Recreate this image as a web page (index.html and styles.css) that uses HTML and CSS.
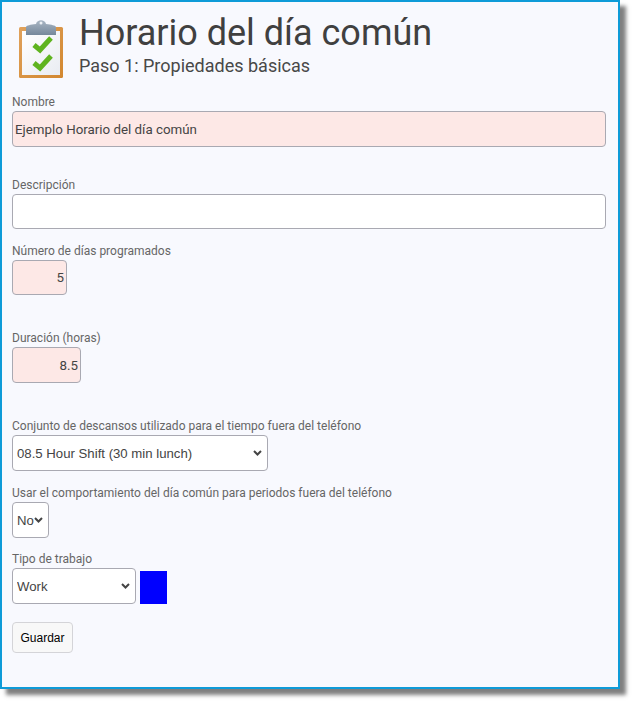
FILE: index.html
```html
<!DOCTYPE html>
<html lang="es">
<head>
    <meta charset="UTF-8">
    <meta name="viewport" content="width=device-width, initial-scale=1.0">
    <title>Horario del día común</title>
    <link rel="stylesheet" href="styles.css">
</head>
<body>
    <div class="frame">
        <div class="page-header">
            <svg class="header-icon" width="46" height="60" viewBox="0 0 46 60">
                <defs>
                    <linearGradient id="board-grad" x1="0" y1="0" x2="1" y2="1">
                        <stop offset="0" stop-color="#e0a25c"/>
                        <stop offset="1" stop-color="#d2872f"/>
                    </linearGradient>
                    <linearGradient id="clip-grad" x1="0" y1="0" x2="0" y2="1">
                        <stop offset="0" stop-color="#a9b6c4"/>
                        <stop offset="1" stop-color="#76889b"/>
                    </linearGradient>
                    <linearGradient id="paper-grad" x1="0" y1="0" x2="1" y2="1">
                        <stop offset="0" stop-color="#ffffff"/>
                        <stop offset="1" stop-color="#e9ecf2"/>
                    </linearGradient>
                </defs>
                <rect x="0" y="7" width="44" height="51" rx="1.5" fill="url(#board-grad)"/>
                <rect x="3" y="11" width="38" height="44" fill="url(#paper-grad)"/>
                <path d="M7 7 C8 5 11 5 17 4 C18 -1 26 -1 27 4 C33 5 36 5 37 7 L37 15 L7 15 Z" fill="url(#clip-grad)"/>
                <circle cx="22" cy="3" r="1.5" fill="#eef1f5"/>
                <path d="M15 25 L21 30 L32 18" fill="none" stroke="#5fb41f" stroke-width="5"/>
                <path d="M15 43 L21 48 L32 36" fill="none" stroke="#5fb41f" stroke-width="5"/>
            </svg>
            <div class="header-text">
                <h1>Horario del día común</h1>
                <h2>Paso 1: Propiedades básicas</h2>
            </div>
        </div>

        <form class="schedule-form">
            <div class="field">
                <label>Nombre</label>
                <input type="text" class="text-input required" value="Ejemplo Horario del día común">
            </div>
            <div class="field gap-large">
                <label>Descripción</label>
                <input type="text" class="text-input short-input" value="">
            </div>
            <div class="field gap-small">
                <label>Número de días programados</label>
                <input type="text" class="text-input short-input required number-input days-input" value="5">
            </div>
            <div class="field gap-wide">
                <label>Duración (horas)</label>
                <input type="text" class="text-input required number-input hours-input" value="8.5">
            </div>
            <div class="field gap-wide">
                <label>Conjunto de descansos utilizado para el tiempo fuera del teléfono</label>
                <select class="select-input break-select">
                    <option>08.5 Hour Shift (30 min lunch)</option>
                </select>
            </div>
            <div class="field gap-small">
                <label>Usar el comportamiento del día común para periodos fuera del teléfono</label>
                <select class="select-input yesno-select">
                    <option>No</option>
                </select>
            </div>
            <div class="field gap-tight">
                <label>Tipo de trabajo</label>
                <div class="work-row">
                    <select class="select-input work-select">
                        <option>Work</option>
                    </select>
                    <span class="color-swatch"></span>
                </div>
            </div>
            <button type="button" class="save-btn">Guardar</button>
        </form>
    </div>
</body>
</html>
```

FILE: styles.css
```css
html, body {
    margin: 0;
    background: #ffffff;
}
body {
    font-family: Roboto, "Liberation Sans", sans-serif;
    height: 703px;
    overflow: hidden;
}
.frame {
    box-sizing: border-box;
    width: 620px;
    height: 689px;
    padding: 0 12px 0 10px;
    background-color: #f8f9fe;
    border: 2px solid #0e9bd8;
    box-shadow: 6px 6px 4px rgba(0, 0, 0, 0.5);
    color: #444;
}
.page-header {
    display: flex;
    align-items: flex-start;
    height: 93px;
}
.header-icon {
    margin: 18px 0 0 7px;
    flex-shrink: 0;
}
.header-text {
    margin-left: 14px;
    padding-top: 10px;
}
h1 {
    margin: 0;
    font-size: 36px;
    line-height: 42px;
    font-weight: 400;
    color: #404040;
}
h2 {
    margin: 0;
    font-size: 18px;
    line-height: 24px;
    font-weight: 400;
    color: #484848;
}
.gap-large {
    margin-top: 31px;
}
.gap-wide {
    margin-top: 36px;
}
.gap-small {
    margin-top: 15px;
}
.gap-tight {
    margin-top: 14px;
}
label {
    display: block;
    font-size: 12px;
    line-height: 14px;
    padding-bottom: 2px;
    color: #666;
}
.text-input, .select-input {
    display: block;
    box-sizing: border-box;
    height: 36px;
    margin: 0;
    border: 1px solid #a9a9b2;
    border-radius: 4px;
    background-color: #ffffff;
    color: #444;
    outline: none;
}
.text-input {
    width: 100%;
    padding: 0 2px;
    font-family: Roboto, "Liberation Sans", sans-serif;
    font-size: 13.33px;
}
.select-input {
    appearance: none;
    padding: 0 0 0 4px;
    font-family: "Liberation Sans", Arial, sans-serif;
    font-size: 13.2px;
    background-image: url("data:image/svg+xml,%3Csvg xmlns='http://www.w3.org/2000/svg' width='9' height='6' viewBox='0 0 9 6'%3E%3Cpath d='M1 1 L4.5 4.5 L8 1' fill='none' stroke='%23444' stroke-width='2'/%3E%3C/svg%3E");
    background-repeat: no-repeat;
    background-position: right 5px center;
    background-size: 9px 6px;
}
.short-input {
    height: 35px;
}
.required {
    background-color: #fde8e6;
}
.number-input {
    text-align: right;
}
.days-input {
    width: 55px;
}
.hours-input {
    width: 69px;
}
.break-select {
    width: 256px;
}
.yesno-select {
    width: 37px;
}
.work-select {
    width: 124px;
}
.work-row {
    display: flex;
    align-items: flex-end;
    gap: 4px;
}
.color-swatch {
    display: block;
    width: 27px;
    height: 33px;
    background-color: #0000ff;
}
.save-btn {
    display: block;
    box-sizing: border-box;
    width: 61px;
    height: 31px;
    margin-top: 18px;
    padding: 0;
    font-family: "Liberation Sans", Arial, sans-serif;
    font-size: 12px;
    color: #000;
    background-color: #f8f8f8;
    border: 1px solid #d4d4d8;
    border-radius: 4px;
}
```
